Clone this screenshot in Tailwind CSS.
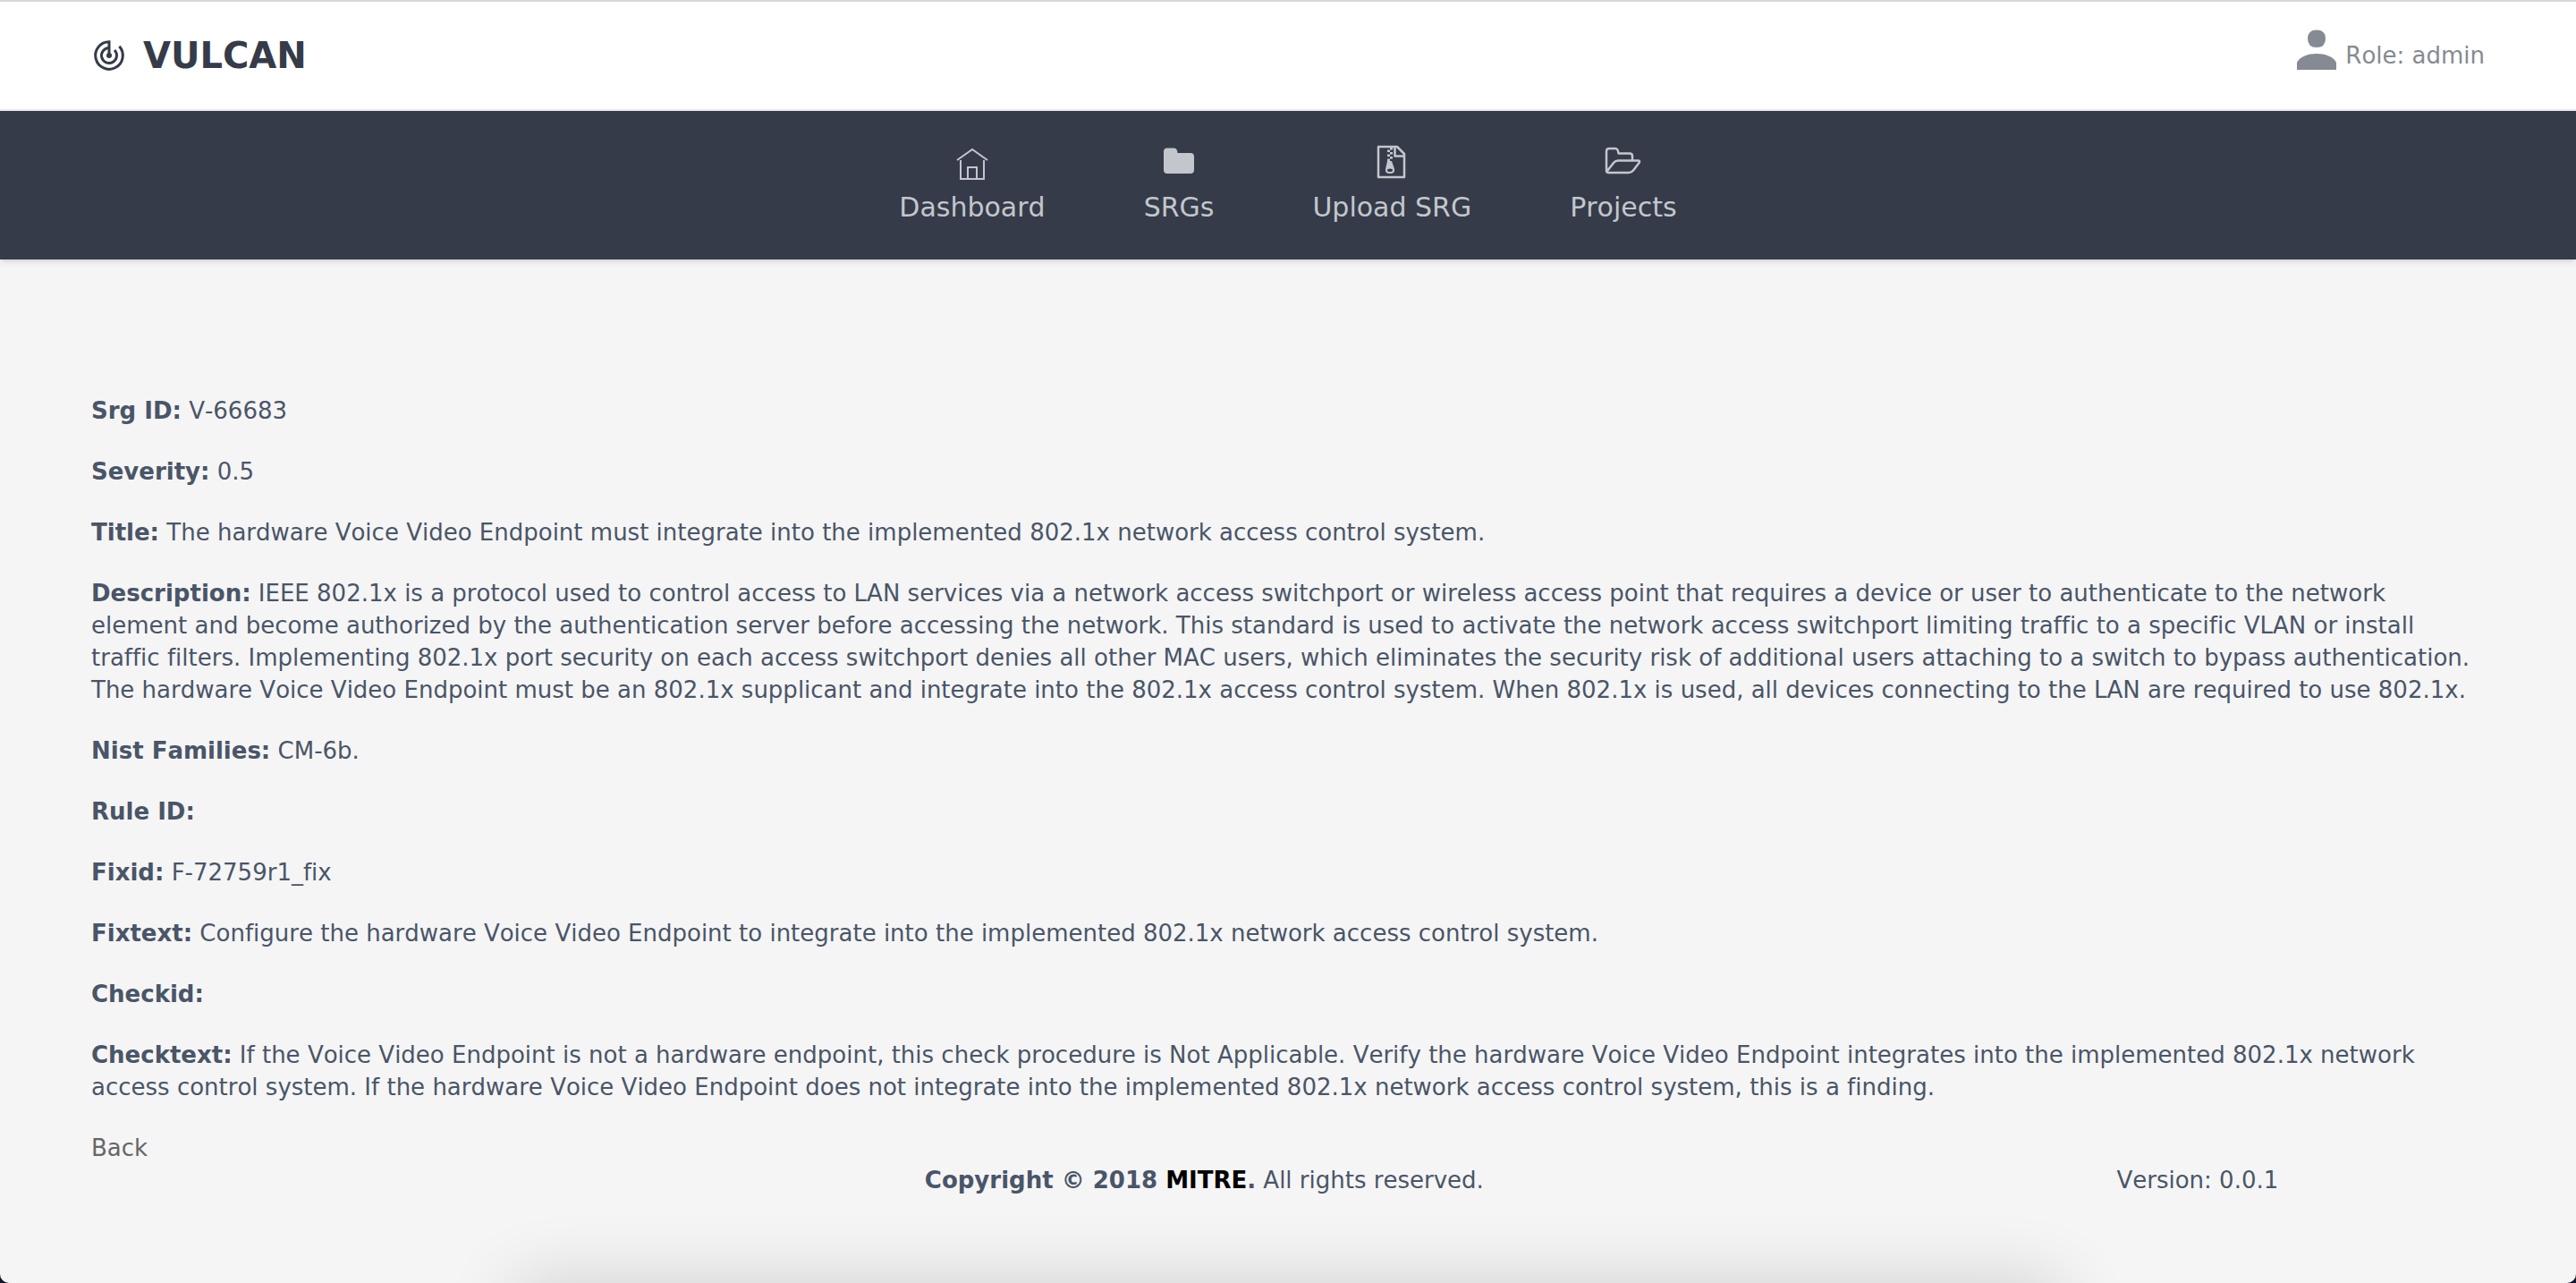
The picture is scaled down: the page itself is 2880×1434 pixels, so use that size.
<!DOCTYPE html>
<html lang="en">
<head>
<meta charset="utf-8">
<title>Vulcan</title>
<script src="https://cdn.jsdelivr.net/npm/@tailwindcss/browser@4"></script>
</head>
<body class="bg-[#11162c]">
<div class="relative flex min-h-screen flex-col overflow-hidden rounded-b-[10px] bg-[#f5f5f5] font-[Verdana,'DejaVu_Sans',sans-serif] text-[26px] leading-[36px] text-[#4a5568] [font-kerning:none] [font-variant-ligatures:none]">
  <header class="flex h-[124px] items-center justify-between border-t-2 border-b-2 border-t-[#d5d6d7] border-b-[#e9e9ee] bg-white px-[102px]">
    <a href="#" class="flex items-center gap-[18px] text-[40px] leading-[48px] font-bold text-[#353b49]">
      <svg class="size-10" viewBox="0 0 40 40" fill="none" stroke="currentColor" stroke-width="3" aria-hidden="true">
        <path d="M20 20V4.700A15.300 15.300 0 1 0 31.400 9.800"/>
        <path d="M20 11.500A8.500 8.500 0 1 0 26 14"/>
        <circle cx="20" cy="20" r="3" fill="currentColor" stroke="none"/>
      </svg>
      <span>VULCAN</span>
    </a>
    <div class="flex items-end gap-2 pb-3 text-[#868a93]">
      <svg class="size-12" viewBox="0 0 48 48" fill="currentColor" aria-hidden="true">
        <path d="M14 11Q14 1.500 24 1.500T34 11Q34 21 24 21T14 11ZM2 46V38C5 31 15 28 24 28S43 31 46 38V46Z"/>
      </svg>
      <span>Role: admin</span>
    </div>
  </header>

  <nav class="flex h-[166px] justify-center gap-[110px] bg-[#353b49] pt-9 text-[30px] leading-[36px] text-[#c3c6cc] shadow-md">
    <a href="#" class="flex flex-col items-center gap-[10px]">
      <svg class="size-11" viewBox="0 0 44 44" fill="none" stroke="currentColor" stroke-width="2" aria-hidden="true">
        <path d="M5 19L22 7L39 19M9 19V40H35V19M17 40V27H27V40"/>
      </svg>
      <span>Dashboard</span>
    </a>
    <a href="#" class="flex flex-col items-center gap-[10px]">
      <svg class="size-11" viewBox="0 0 44 44" fill="currentColor" aria-hidden="true">
        <path d="M9 5.500H16Q20.500 5.500 20.500 11H35Q39 11 39 15V30Q39 34 35 34H9Q5 34 5 30V9.500Q5 5.500 9 5.500Z"/>
      </svg>
      <span>SRGs</span>
    </a>
    <a href="#" class="flex flex-col items-center gap-[10px]">
      <svg class="size-11" viewBox="0 0 44 44" fill="none" stroke="currentColor" stroke-width="2.500" stroke-linejoin="round" aria-hidden="true">
        <path d="M8 4H28L36 12V38H7V4ZM25.500 4V14.500H36"/>
        <path fill="currentColor" stroke="none" d="M20 5H23V7.500H20ZM17 7.500H20V10H17ZM20 10H23V12.500H20ZM17 12.500H20V15H17ZM20 15H23V17.500H20ZM17 17.500H20V20H17Z"/>
        <path fill="currentColor" stroke="none" fill-rule="evenodd" d="M17 20H22L25 29Q26 34 20 34T15 29ZM17 30Q17 32 20 32T23 30Q23 28.500 20 28.500T17 30Z"/>
      </svg>
      <span>Upload SRG</span>
    </a>
    <a href="#" class="flex flex-col items-center gap-[10px]">
      <svg class="size-11" viewBox="0 0 44 44" fill="none" stroke="currentColor" stroke-width="2.500" stroke-linejoin="round" aria-hidden="true">
        <path d="M3 31V9Q3 6 6 6H13Q16 6 16.500 11.500H29Q32 11.500 32 14.500V19M3 31Q3 33 6 33H28Q31 33 33 30.500L39.500 22Q41 19.500 38.500 19.500H16Q13 19.500 11 22L4 31"/>
      </svg>
      <span>Projects</span>
    </a>
  </nav>

  <main class="flex flex-col gap-8 px-[102px] pt-[151px]">
    <p><strong>Srg ID:</strong> V-66683</p>
    <p><strong>Severity:</strong> 0.5</p>
    <p><strong>Title:</strong> The hardware Voice Video Endpoint must integrate into the implemented 802.1x network access control system.</p>
    <p><strong>Description:</strong> IEEE 802.1x is a protocol used to control access to LAN services via a network access switchport or wireless access point that requires a device or user to authenticate to the network element and become authorized by the authentication server before accessing the network. This standard is used to activate the network access switchport limiting traffic to a specific VLAN or install traffic filters. Implementing 802.1x port security on each access switchport denies all other MAC users, which eliminates the security risk of additional users attaching to a switch to bypass authentication. The hardware Voice Video Endpoint must be an 802.1x supplicant and integrate into the 802.1x access control system. When 802.1x is used, all devices connecting to the LAN are required to use 802.1x.</p>
    <p><strong>Nist Families:</strong> CM-6b.</p>
    <p><strong>Rule ID:</strong></p>
    <p><strong>Fixid:</strong> F-72759r1_fix</p>
    <p><strong>Fixtext:</strong> Configure the hardware Voice Video Endpoint to integrate into the implemented 802.1x network access control system.</p>
    <p><strong>Checkid:</strong></p>
    <p><strong>Checktext:</strong> If the Voice Video Endpoint is not a hardware endpoint, this check procedure is Not Applicable. Verify the hardware Voice Video Endpoint integrates into the implemented 802.1x network access control system. If the hardware Voice Video Endpoint does not integrate into the implemented 802.1x network access control system, this is a finding.</p>
    <a href="#" class="self-start text-[#666666]">Back</a>
  </main>

  <footer class="grid grid-cols-[17fr_59fr_24fr] px-[102px] text-center">
    <p class="col-start-2"><strong>Copyright © 2018 <a href="#" class="text-black">MITRE</a>.</strong> All rights reserved.</p>
    <p>Version: 0.0.1</p>
  </footer>

  <div class="absolute top-full left-1/5 h-20 w-3/5 shadow-[0_0_80px_rgba(0,0,0,0.16)]"></div>
</div>
</body>
</html>
